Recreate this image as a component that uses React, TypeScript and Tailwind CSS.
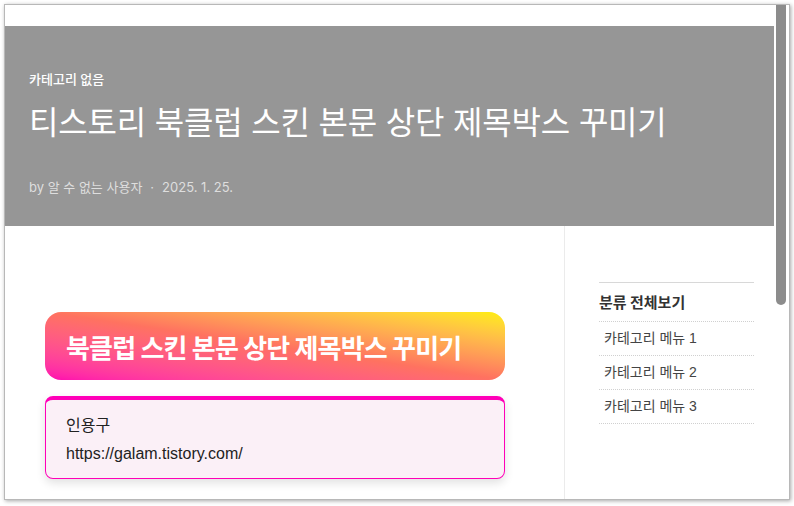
export default function App() {
  const menus = ['카테고리 메뉴 1', '카테고리 메뉴 2', '카테고리 메뉴 3'];

  return (
    <div className="w-[794px] h-[506px] bg-white p-[4px] pb-[6px] overflow-hidden">
      <div className="flex h-full border border-[#b8b8b8] shadow-[1px_1px_4px_rgba(0,0,0,0.35)] bg-white overflow-hidden">
        <div className="flex-1 flex flex-col font-['Inter','Noto_Sans_CJK_KR',sans-serif]">
          <div className="h-[21px] bg-white" />
          <header className="h-[200px] bg-[#969696] px-6 pt-[44px]">
            <div className="text-[13px] font-medium text-white leading-[18px]">카테고리 없음</div>
            <h1 className="mt-[13px] text-[32px] leading-[44px] text-white tracking-[-0.2px]">
              티스토리 북클럽 스킨 본문 상단 제목박스 꾸미기
            </h1>
            <div className="mt-[33px] text-[13px] leading-[18px] text-[#dedede] flex items-center gap-2">
              <span>by 알 수 없는 사용자</span>
              <span>·</span>
              <span>2025. 1. 25.</span>
            </div>
          </header>
          <div className="flex flex-1">
            <main className="w-[559px] pl-10 pr-[59px] pt-[86px]">
              <div className="h-[68px] rounded-[16px] bg-linear-to-tr from-[#ff00b0] via-[#ff7260] to-[#ffee00] flex items-center px-[21px]">
                <span className="text-white font-bold text-[26px] tracking-[-0.8px] font-['Noto_Sans_CJK_KR',sans-serif]">
                  북클럽 스킨 본문 상단 제목박스 꾸미기
                </span>
              </div>
              <div className="mt-4 h-[83px] rounded-[8px] border border-t-[4px] border-[#ff00b8] bg-[#fbf0f7] shadow-[0_4px_10px_rgba(0,0,0,0.12)] px-5 pt-[13px]">
                <div className="text-[16px] leading-[22px] text-[#222] font-['Noto_Sans_CJK_KR',sans-serif]">인용구</div>
                <div className="mt-[9px] text-[16px] leading-[20px] text-[#222] font-['Liberation_Sans',sans-serif]">
                  https://galam.tistory.com/
                </div>
              </div>
            </main>
            <aside className="flex-1 border-l border-[#ebebeb] pl-[34px] pr-5 pt-[56px] font-['Liberation_Sans','Noto_Sans_CJK_KR',sans-serif]">
              <div className="border-t border-[#d8d8d8]">
                <div className="h-[39px] flex items-center border-b border-dotted border-[#d0d0d0] text-[15px] font-bold text-[#333] font-['Noto_Sans_CJK_KR',sans-serif]">
                  분류 전체보기
                </div>
                {menus.map((m) => (
                  <div
                    key={m}
                    className="h-[34px] flex items-center pl-[5px] border-b border-dotted border-[#d0d0d0] text-[14px] text-[#444]"
                  >
                    {m}
                  </div>
                ))}
              </div>
            </aside>
          </div>
        </div>
        <div className="w-[15px] bg-white relative">
          <div className="absolute left-[2px] top-0 w-[10px] h-[300px] bg-[#8c8c8c] rounded-b-[5px]" />
        </div>
      </div>
    </div>
  );
}
